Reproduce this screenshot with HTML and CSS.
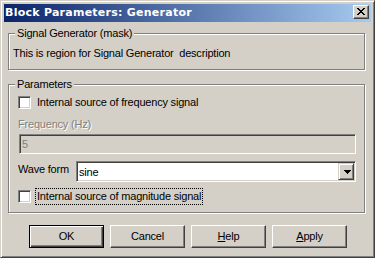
FILE: index.html
```html
<!DOCTYPE html>
<html>
<head>
<meta charset="utf-8">
<link rel="stylesheet" href="styles.css">
</head>
<body>
<div class="window">
  <div class="titlebar">
    <span class="title">Block Parameters: Generator</span>
    <span class="close"><svg width="8" height="7" viewBox="0 0 8 7" shape-rendering="crispEdges"><path fill="#000" d="M0 0h2v1H0zM6 0h2v1H6zM1 1h2v1H1zM5 1h2v1H5zM2 2h4v1H2zM3 3h2v1H3zM2 4h4v1H2zM1 5h2v1H1zM5 5h2v1H5zM0 6h2v1H0zM6 6h2v1H6z"/></svg></span>
  </div>
  <div class="content">
    <div class="group g1">
      <span class="legend">Signal Generator (mask)</span>
      <div class="desc">This is region for Signal Generator  description</div>
    </div>
    <div class="group g2">
      <span class="legend">Parameters</span>
      <div class="check-row r1"><span class="box"></span><span class="label">Internal source of frequency signal</span></div>
      <div class="field-label disabled">Frequency (Hz)</div>
      <div class="edit">5</div>
      <div class="combo-row">
        <span class="combo-label">Wave form</span>
        <div class="combo"><span class="value">sine</span><span class="drop"><svg width="7" height="4" viewBox="0 0 7 4" shape-rendering="crispEdges"><path fill="#000" d="M0 0h7v1H0zM1 1h5v1H1zM2 2h3v1H2zM3 3h1v1H3z"/></svg></span></div>
      </div>
      <div class="check-row r2"><span class="box"></span><span class="label focus">Internal source of magnitude signal</span></div>
    </div>
    <div class="buttons">
      <span class="btn default">OK</span>
      <span class="btn">Cancel</span>
      <span class="btn"><u>H</u>elp</span>
      <span class="btn"><u>A</u>pply</span>
    </div>
  </div>
</div>
</body>
</html>
```
FILE: styles.css
```css
body {
  margin: 0;
  background: #d4d0c8;
  font-family: "Liberation Sans", Arial, sans-serif;
  font-size: 11px;
  letter-spacing: -0.2px;
  color: #000;
}
.window {
  width: 375px;
  height: 258px;
  box-sizing: border-box;
  border: 1px solid;
  border-color: #d4d0c8 #404040 #404040 #d4d0c8;
  box-shadow: inset 1px 1px #fff, inset -1px -1px #808080;
  padding: 3px;
  background: #d4d0c8;
}
.titlebar {
  height: 18px;
  display: flex;
  align-items: flex-start;
  background: linear-gradient(to right, #0a246a, #a6caf0);
}
.title {
  flex: 1;
  font-family: "DejaVu Sans", sans-serif;
  font-weight: bold;
  font-size: 11px;
  letter-spacing: 0.25px;
  line-height: 18px;
  color: #fff;
  padding-left: 1px;
  white-space: nowrap;
}
.close {
  display: block;
  width: 16px;
  height: 14px;
  box-sizing: border-box;
  margin: 1px 2px 0 0;
  border: 1px solid;
  border-color: #fff #404040 #404040 #fff;
  box-shadow: inset -1px -1px #808080;
  background: #d4d0c8;
  padding: 2px 0 0 3px;
}
.close svg { display: block; }
.content {
  display: flex;
  flex-direction: column;
}
.group {
  border: 1px solid #808080;
  box-shadow: inset 1px 1px #fff, 1px 1px #fff;
  margin: 0 6px 0 4px;
  line-height: 13px;
}
.g1 {
  margin-top: 11px;
  padding: 0 4px 9px 4px;
}
.g2 {
  margin-top: 14px;
  padding: 0 8px 7px 9px;
}
.legend {
  display: block;
  width: max-content;
  margin-top: -7px;
  margin-left: 2px;
  padding: 0 2px;
  background: #d4d0c8;
  line-height: 13px;
}
.g2 .legend { margin-left: -3px; }
.desc {
  margin-top: 7px;
  white-space: pre;
}
.check-row {
  display: flex;
  align-items: center;
  height: 17px;
}
.r1 { margin-top: 3px; }
.r2 { margin-top: 6px; }
.box {
  width: 13px;
  height: 13px;
  box-sizing: border-box;
  border: 1px solid;
  border-color: #808080 #fff #fff #808080;
  box-shadow: inset 1px 1px #404040, inset -1px -1px #d4d0c8;
  background: #fff;
}
.label {
  margin-left: 4px;
  padding: 0 1px;
  border: 1px solid transparent;
  line-height: 15px;
}
.label.focus {
  border: 1px dotted #000;
}
.field-label {
  margin-top: 7px;
  line-height: 13px;
}
.disabled {
  color: #808080;
  text-shadow: 1px 1px 0 #fff;
}
.edit {
  margin-top: 3px;
  margin-left: 1px;
  height: 20px;
  box-sizing: border-box;
  border: 1px solid;
  border-color: #808080 #fff #fff #808080;
  box-shadow: inset 1px 1px #404040, inset -1px -1px #d4d0c8;
  background: #d4d0c8;
  color: #808080;
  padding-left: 2px;
  line-height: 18px;
}
.combo-row {
  margin-top: 7px;
  display: flex;
  align-items: flex-start;
}
.combo-label {
  flex: 1;
  margin-top: 2px;
  line-height: 13px;
}
.combo {
  width: 280px;
  height: 21px;
  box-sizing: border-box;
  border: 1px solid;
  border-color: #808080 #fff #fff #808080;
  box-shadow: inset 1px 1px #404040, inset -1px -1px #d4d0c8;
  background: #fff;
  padding: 1px;
  display: flex;
}
.value {
  flex: 1;
  padding: 2px 0 0 1px;
  line-height: 15px;
}
.drop {
  width: 16px;
  height: 17px;
  box-sizing: border-box;
  border: 1px solid;
  border-color: #d4d0c8 #404040 #404040 #d4d0c8;
  box-shadow: inset 1px 1px #fff, inset -1px -1px #808080;
  background: #d4d0c8;
  display: flex;
  align-items: center;
  justify-content: center;
  padding-left: 2px;
}
.drop svg { display: block; }
.buttons {
  display: flex;
  gap: 6px;
  margin-top: 12px;
  padding-left: 25px;
}
.btn {
  width: 75px;
  height: 23px;
  box-sizing: border-box;
  border: 1px solid;
  border-color: #fff #404040 #404040 #fff;
  box-shadow: inset -1px -1px #808080;
  background: #d4d0c8;
  display: flex;
  align-items: center;
  justify-content: center;
  padding-bottom: 1px;
  line-height: 13px;
}
.btn.default {
  border: 1px solid #000;
  box-shadow: inset 1px 1px #fff, inset -1px -1px #404040, inset -2px -2px #808080;
}
.btn u { text-decoration: underline; }
```
